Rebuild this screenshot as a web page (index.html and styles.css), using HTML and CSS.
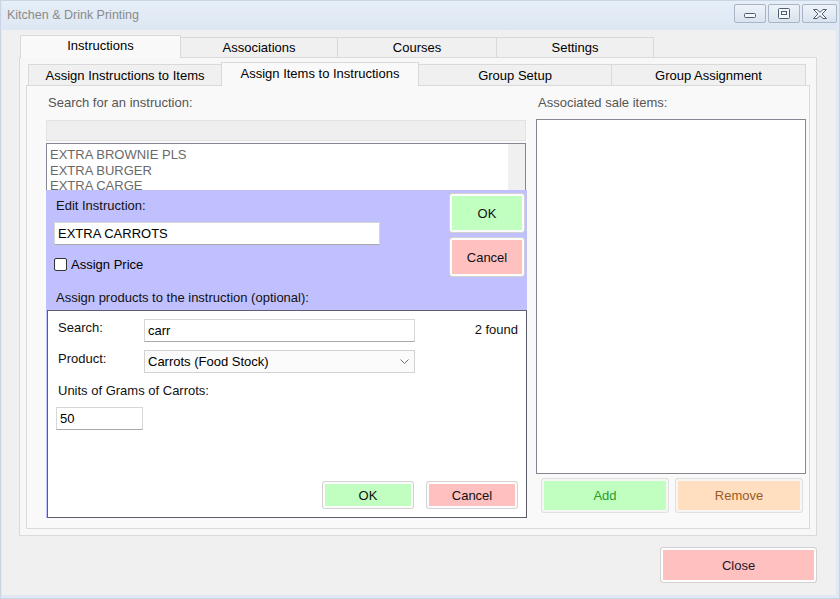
FILE: index.html
```html
<!DOCTYPE html>
<html>
<head>
<meta charset="utf-8">
<link rel="stylesheet" href="styles.css">
</head>
<body>
<div class="window">
  <div class="titlebar">
    <span class="title">Kitchen &amp; Drink Printing</span>
    <div class="winbtns">
      <span class="wbtn w-min"><svg width="14" height="8" viewBox="0 0 14 8"><rect x="1.5" y="1.5" width="11" height="4" rx="1" fill="#f4f7fb" stroke="#4e5d71"/></svg></span>
      <span class="wbtn w-max"><svg width="12" height="11" viewBox="0 0 12 11"><rect x="0.5" y="0.5" width="11" height="10" rx="1" fill="#f4f7fb" stroke="#4e5d71"/><rect x="3.5" y="3.5" width="5" height="3" fill="#f4f7fb" stroke="#4e5d71"/></svg></span>
      <span class="wbtn w-close"><svg width="16" height="12" viewBox="0 0 16 12"><path d="M1.5 1.5 H5 L8 4.3 L11 1.5 H14.5 L10 6 L14.5 10.5 H11 L8 7.7 L5 10.5 H1.5 L6 6 Z" fill="#f4f7fb" stroke="#4e5d71" stroke-linejoin="round"/></svg></span>
    </div>
  </div>
  <div class="client">
    <div class="outer">
      <div class="ostrip">
        <div class="otab sel" style="width:161px">Instructions</div>
        <div class="otab" style="width:158px">Associations</div>
        <div class="otab" style="width:160px">Courses</div>
        <div class="otab" style="width:158px">Settings</div>
      </div>
      <div class="opanel">
        <div class="istrip">
          <div class="itab" style="width:194px">Assign Instructions to Items</div>
          <div class="itab sel" style="width:198px">Assign Items to Instructions</div>
          <div class="itab" style="width:194px">Group Setup</div>
          <div class="itab" style="width:195px">Group Assignment</div>
        </div>
        <div class="ipanel">
          <div class="left">
            <div class="lbl">Search for an instruction:</div>
            <div class="searchbox"></div>
            <div class="listbox">
              <div class="items">
                <div>EXTRA BROWNIE PLS</div>
                <div>EXTRA BURGER</div>
                <div>EXTRA CARGE</div>
              </div>
              <div class="vscroll"></div>
            </div>
            <div class="purple">
              <div class="ptop">
                <div class="editform">
                  <div class="plbl">Edit Instruction:</div>
                  <div class="tb tb-edit">EXTRA CARROTS</div>
                  <div class="checkrow"><span class="chk"></span><span>Assign Price</span></div>
                  <div class="plbl plbl2">Assign products to the instruction (optional):</div>
                </div>
                <div class="editbtns">
                  <div class="btn green b-edit">OK</div>
                  <div class="btn red b-edit">Cancel</div>
                </div>
              </div>
              <div class="whitebox">
                <div class="row">
                  <div class="rlbl">Search:</div>
                  <div class="tb tb-wide">carr</div>
                  <div class="found">2 found</div>
                </div>
                <div class="row row2">
                  <div class="rlbl rlbl2">Product:</div>
                  <div class="tb sel-box">Carrots (Food Stock)<svg class="chev" width="9" height="5" viewBox="0 0 9 5"><path d="M0.5 0.5 L4.5 4.5 L8.5 0.5" fill="none" stroke="#707070"/></svg></div>
                </div>
                <div class="ulbl">Units of Grams of Carrots:</div>
                <div class="tb tb-units">50</div>
                <div class="wbtnrow">
                  <div class="btn green b-small">OK</div>
                  <div class="btn red b-small">Cancel</div>
                </div>
              </div>
            </div>
          </div>
          <div class="right">
            <div class="lbl">Associated sale items:</div>
            <div class="salelist"></div>
            <div class="addrow">
              <div class="btn green b-add">Add</div>
              <div class="btn orange b-add">Remove</div>
            </div>
          </div>
        </div>
      </div>
    </div>
    <div class="footer">
      <div class="btn red b-close">Close</div>
    </div>
  </div>
</div>
</body>
</html>
```
FILE: styles.css
```css
* { box-sizing: border-box; }
html, body { margin: 0; padding: 0; }
body {
  font-family: "Liberation Sans", Arial, sans-serif;
  font-size: 13px;
  color: #000;
  background: #ffffff;
}
.window {
  width: 840px;
  height: 599px;
  background: #dfe8f3;
  border: 1px solid #c9d5e3;
  padding: 0 3px 3px 1px;
  display: flex;
  flex-direction: column;
}
.titlebar {
  height: 29px;
  display: flex;
  align-items: flex-start;
  background: linear-gradient(#e6eef7, #dde7f3);
}
.title {
  padding-left: 5px;
  margin-top: 7px;
  color: #8a8a8a;
  font-size: 12.5px;
}
.winbtns {
  margin-left: auto;
  margin-right: -1px;
  margin-top: 3px;
  display: flex;
  gap: 2px;
}
.wbtn {
  width: 32px;
  height: 19px;
  border: 1px solid #a7b5c6;
  border-radius: 2px;
  background: linear-gradient(#eef3f8, #d9e3ee);
  display: flex;
  align-items: center;
  justify-content: center;
}
.w-close { width: 35px; }
.w-min svg { margin-top: 5px; }
.client {
  flex: 1;
  background: #f0f0f0;
  padding: 5px 0 0 17px;
}
.outer { width: 798px; }
.ostrip {
  height: 22px;
  margin-left: 1px;
  display: flex;
  align-items: flex-end;
}
.otab, .itab {
  height: 20px;
  border: 1px solid #d9d9d9;
  border-bottom: none;
  background: #f0f0f0;
  display: flex;
  align-items: center;
  justify-content: center;
  margin-left: -1px;
}
.otab:first-child, .itab:first-child { margin-left: 0; }
.otab.sel {
  height: 23px;
  margin-bottom: -1px;
  background: #f9f9f9;
  position: relative;
  z-index: 1;
  padding-bottom: 3px;
}
.opanel {
  height: 479px;
  border: 1px solid #dadada;
  background: #f7f7f7;
  padding: 4px 6px 6px 6px;
}
.istrip {
  height: 23px;
  margin-left: 2px;
  display: flex;
  align-items: flex-end;
}
.itab { height: 21px; }
.itab.sel {
  height: 24px;
  margin-bottom: -1px;
  background: #f9f9f9;
  position: relative;
  z-index: 1;
  padding-bottom: 3px;
}
.ipanel {
  height: 444px;
  border: 1px solid #dadada;
  background: #f9f9f9;
  padding: 9px 0 0 19px;
  display: flex;
  gap: 9px;
}
.left { width: 481px; display: flex; flex-direction: column; }
.right { width: 270px; display: flex; flex-direction: column; }
.lbl {
  line-height: 16px;
  height: 16px;
  padding-left: 2px;
  color: #555;
}
.searchbox {
  margin-top: 9px;
  height: 21px;
  border: 1px solid #e2e2e2;
  background: #efefef;
  width: 480px;
}
.listbox {
  margin-top: 2px;
  width: 480px;
  height: 47px;
  border: 1px solid #828790;
  border-bottom: none;
  background: #fff;
  display: flex;
  overflow: hidden;
}
.items {
  flex: 1;
  padding: 3px 0 0 3px;
  line-height: 15.5px;
  color: #6a6a6a;
}
.vscroll {
  width: 17px;
  background: #f0f0f0;
}
.purple {
  width: 481px;
  height: 328px;
  background: #c0c0ff;
  display: flex;
  flex-direction: column;
}
.ptop {
  height: 120px;
  display: flex;
}
.editform {
  flex: 1;
  padding: 8px 0 0 8px;
  display: flex;
  flex-direction: column;
  align-items: flex-start;
}
.plbl {
  line-height: 16px;
  height: 16px;
  padding-left: 2px;
  color: #111;
}
.plbl2 { margin-top: 18px; }
.tb {
  background: #fff;
  border: 1px solid #d6d6d6;
  border-bottom-color: #a9a9a9;
  height: 23px;
  line-height: 21px;
  padding-left: 3px;
  white-space: nowrap;
}
.tb-edit { width: 326px; margin-top: 8px; }
.checkrow {
  margin-top: 11px;
  height: 16px;
  display: flex;
  align-items: center;
}
.chk {
  width: 13px;
  height: 13px;
  border: 1px solid #333;
  border-radius: 2px;
  background: #fff;
  margin-right: 4px;
}
.editbtns {
  padding-top: 3px;
  margin-right: 2px;
  display: flex;
  flex-direction: column;
  gap: 4px;
}
.btn {
  border: 1px solid #d2d2d2;
  border-radius: 3px;
  box-shadow: inset 0 0 0 2px #fdfdfd;
  display: flex;
  align-items: center;
  justify-content: center;
  color: #111;
}
.green { background: #c0ffc0; }
.red { background: #ffc0c0; }
.orange { background: #ffdfc0; }
.b-edit { width: 76px; height: 40px; }
.whitebox {
  margin-left: 1px;
  width: 480px;
  height: 208px;
  border: 1px solid #5f5f6c;
  background: #fff;
  padding: 8px 8px 8px 8px;
  display: flex;
  flex-direction: column;
}
.row { display: flex; }
.row2 { margin-top: 8px; }
.rlbl {
  width: 88px;
  padding-left: 2px;
  padding-top: 1px;
  line-height: 16px;
  color: #111;
}
.rlbl2 { padding-top: 1px; }
.tb-wide { width: 271px; }
.found {
  margin-left: auto;
  padding-top: 3px;
  line-height: 16px;
  color: #111;
}
.sel-box {
  width: 271px;
  background: #fbfbfb;
  border-color: #d2d2d2;
  display: flex;
  align-items: center;
}
.chev { margin-left: auto; margin-right: 5px; }
.ulbl {
  margin-top: 10px;
  padding-left: 2px;
  line-height: 16px;
  color: #111;
}
.tb-units { width: 87px; margin-top: 8px; }
.wbtnrow {
  margin-top: auto;
  display: flex;
  justify-content: flex-end;
  gap: 12px;
}
.b-small { width: 92px; height: 28px; }
.salelist {
  margin-top: 8px;
  height: 355px;
  border: 1px solid #828790;
  background: #fff;
}
.addrow {
  margin-top: 4px;
  margin-left: 5px;
  display: flex;
  gap: 6px;
}
.b-add { width: 128px; height: 35px; box-shadow: inset 0 0 0 2px #f6f6f6; border-color: #e0e0e0; }
.b-add.green { color: #2c9a2c; }
.b-add.orange { color: #9a5a24; }
.footer {
  width: 798px;
  margin-top: 11px;
  display: flex;
  justify-content: flex-end;
}
.b-close { width: 157px; height: 36px; color: #1a1a2a; }
```
